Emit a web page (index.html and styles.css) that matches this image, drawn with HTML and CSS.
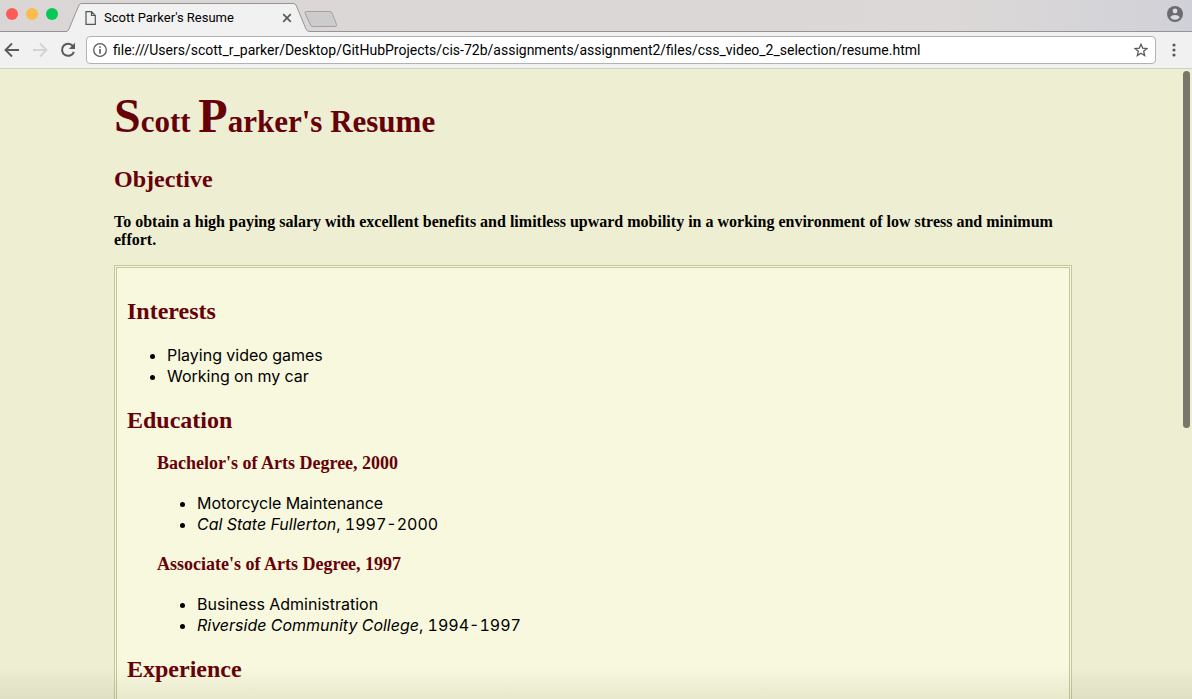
FILE: index.html
```html
<!DOCTYPE html>
<html lang="en">
<head>
<meta charset="utf-8">
<title>Scott Parker's Resume</title>
<link rel="stylesheet" href="styles.css">
</head>
<body>
<header class="browser">
  <div class="tab-strip">
    <div class="lights">
      <button class="light light-close" aria-label="Close window"></button>
      <button class="light light-min" aria-label="Minimize window"></button>
      <button class="light light-max" aria-label="Zoom window"></button>
    </div>
    <div class="tab">
      <svg class="tab-shape" width="244" height="32" viewBox="0 0 244 32" aria-hidden="true"><path d="M0 32L2 30.500Q3 29 13 4.500Q14 3.500 16 3.500H227Q229 3.500 230 5L240 29Q241 31.500 244 31.500V32Z" fill="#f1f1f1"/><path d="M0 31.500Q2 31.500 3 29L13 5Q14 3.500 16 3.500H227Q229 3.500 230 5L240 29Q241 31.500 244 31.500" fill="none" stroke="#969393"/></svg>
      <svg class="tab-page" width="12" height="14" viewBox="0 0 12 14" aria-hidden="true"><path d="M1 .700H6.500L10.300 4.500V13.300H1ZM6.500 .700V4.500H10.300" fill="none" stroke="#555" stroke-width="1.200"/></svg>
      <span class="tab-title">Scott Parker's Resume</span>
      <button class="tab-close" aria-label="Close tab"><svg width="10" height="10" viewBox="0 0 10 10"><path d="M1.200 1.200L8.800 8.800M8.800 1.200L1.200 8.800" stroke="#5a5a5a" stroke-width="1.700"/></svg></button>
    </div>
    <button class="new-tab" aria-label="New tab"><svg width="34" height="17" viewBox="0 0 34 17"><path d="M2.500 .500H26Q27.500 .500 28 2L32.500 13.500Q33 15.500 31 15.500H8.500Q7 15.500 6.500 14L1 2Q.500 .500 2.500 .500Z" fill="#cdcccc" stroke="#a19f9f"/></svg></button>
    <button class="profile" aria-label="Profile"><svg width="16" height="16" viewBox="0 0 16 16"><circle cx="8" cy="8" r="8" fill="#6c6c70"/><circle cx="8" cy="5" r="2.400" fill="#dcdade"/><path d="M3.200 11.200Q4.500 8.900 8 8.900T12.800 11.200Q11.200 13.700 8 13.700T3.200 11.200Z" fill="#dcdade"/></svg></button>
  </div>
  <div class="toolbar">
    <button aria-label="Back"><svg width="16" height="16" viewBox="0 0 16 16"><path d="M15 8H2M8 1.500L1.500 8L8 14.500" fill="none" stroke="#5a5a5a" stroke-width="1.900"/></svg></button>
    <button aria-label="Forward"><svg width="16" height="16" viewBox="0 0 16 16"><path d="M1 8H14M8 1.500L14.500 8L8 14.500" fill="none" stroke="#d3d3d3" stroke-width="1.900"/></svg></button>
    <button aria-label="Reload"><svg width="16" height="16" viewBox="0 0 16 16"><path d="M13.200 4.300A6.100 6.100 0 1 0 13.900 9.800" fill="none" stroke="#5a5a5a" stroke-width="2"/><path d="M15 .800V7H8.800Z" fill="#5a5a5a"/></svg></button>
    <div class="address">
      <svg width="14" height="14" viewBox="0 0 14 14" aria-hidden="true"><circle cx="7" cy="7" r="6.300" fill="none" stroke="#5a5a5a" stroke-width="1.300"/><path d="M7 3.200V4.800M7 6V10.800" stroke="#5a5a5a" stroke-width="1.600"/></svg>
      <input class="url" type="text" aria-label="Address" value="file:///Users/scott_r_parker/Desktop/GitHubProjects/cis-72b/assignments/assignment2/files/css_video_2_selection/resume.html">
      <button aria-label="Bookmark"><svg width="14" height="14" viewBox="0 0 14 14"><path d="M7 1.200L8.700 5.200L13 5.500L9.700 8.300L10.700 12.600L7 10.300L3.300 12.600L4.300 8.300L1 5.500L5.300 5.200Z" fill="none" stroke="#5a5a5a" stroke-width="1.300"/></svg></button>
    </div>
    <button aria-label="Menu"><svg width="16" height="16" viewBox="0 0 16 16"><g fill="#5a5a5a"><circle cx="8" cy="3" r="1.600"/><circle cx="8" cy="8" r="1.600"/><circle cx="8" cy="13" r="1.600"/></g></svg></button>
  </div>
</header>
<main class="page">
  <h1><span class="initial">S</span>cott <span class="initial">P</span>arker's Resume</h1>
  <h2>Objective</h2>
  <p class="objective">To obtain a high paying salary with excellent benefits and limitless upward mobility in a working environment of low stress and minimum effort.</p>
  <div class="details">
    <h2>Interests</h2>
    <ul>
      <li>Playing video games</li>
      <li>Working on my car</li>
    </ul>
    <h2>Education</h2>
    <div class="entry">
      <h3>Bachelor's of Arts Degree, 2000</h3>
      <ul>
        <li>Motorcycle Maintenance</li>
        <li><em>Cal State Fullerton</em>, 1997-2000</li>
      </ul>
      <h3>Associate's of Arts Degree, 1997</h3>
      <ul>
        <li>Business Administration</li>
        <li><em>Riverside Community College</em>, 1994-1997</li>
      </ul>
    </div>
    <h2>Experience</h2>
  </div>
  <div class="scroll-thumb"></div>
  <div class="edge-shade"></div>
</main>
</body>
</html>
```
FILE: styles.css
```css
* { box-sizing: border-box; }
body {
  margin: 0;
  height: 100vh;
  display: flex;
  flex-direction: column;
  overflow: hidden;
  background: #eeeed3;
  color: #000;
}
button {
  display: flex;
  flex: none;
  padding: 0;
  border: 0;
  background: none;
}
.browser { flex: none; font-family: Roboto, sans-serif; }
.tab-strip {
  display: flex;
  height: 32px;
  background: linear-gradient(90deg, #dad6d5, #dcd8d7 80%, #d0d1d8);
  box-shadow: inset 0 -1px #969393;
}
.lights { display: flex; gap: 8px; padding: 8px 0 0 6px; width: 66px; }
.light { width: 12px; height: 12px; border-radius: 50%; }
.light-close { background: #fc5b57; }
.light-min { background: #fdbc4b; }
.light-max { background: #05c855; }
.tab {
  position: relative;
  display: flex;
  align-items: center;
  width: 244px;
  padding: 4px 18px 0 19px;
}
.tab-shape { position: absolute; inset: 0; }
.tab-page, .tab-title, .tab-close { position: relative; }
.tab-title { flex: 1; margin-left: 7px; font-size: 13px; line-height: 16px; white-space: nowrap; }
.new-tab { align-self: flex-start; margin: 11px 0 0 -6px; position: relative; }
.profile { margin: 6px 9px 0 auto; align-self: flex-start; }
.toolbar {
  display: flex;
  align-items: center;
  gap: 12px;
  height: 37px;
  padding: 0 10px 0 4px;
  background: #f1f1f1;
  border-bottom: 1px solid #cfcfca;
}
.address {
  flex: 1;
  display: flex;
  align-items: center;
  height: 28px;
  margin: 0 -2px 0 -2px;
  padding: 0 7px 0 6px;
  background: #fff;
  border: 1px solid #b2b2b2;
  border-radius: 4px;
}
.url {
  flex: 1;
  min-width: 0;
  margin: 0 6px;
  padding: 0;
  border: 0;
  outline: 0;
  background: none;
  font: 14px/20px Roboto, sans-serif;
  color: #000;
}
.page {
  position: relative;
  flex: 1;
  min-height: 0;
  overflow: hidden;
  padding: 22px 120px 0 114px;
}
h1, h2, h3 { color: #660009; font-family: "Liberation Serif", serif; font-weight: bold; }
h1 { margin: 0; font-size: 31px; line-height: 49px; }
.initial { font-size: 48px; }
h2 { margin: 19px 0; font-size: 24px; line-height: 28px; }
h3 { margin: 0; font-size: 18px; line-height: 20px; }
.objective {
  margin: 20px 0 16px;
  font: bold 16px/18px "Liberation Serif", serif;
}
.details {
  padding: 10px;
  border: 3px double #c5c69b;
  background: #f8f8de;
  font: 16px/21px Inter, sans-serif;
  font-variant-numeric: tabular-nums;
}
ul { margin: 20px 0 19px; padding-left: 40px; }
.entry { padding-left: 30px; }
.scroll-thumb {
  position: absolute;
  top: 2px;
  right: 2px;
  width: 7px;
  height: 357px;
  border-radius: 4px;
  background: #77776a;
}
.edge-shade {
  position: absolute;
  inset: auto 0 0 0;
  height: 32px;
  background: linear-gradient(transparent, rgba(90, 90, 60, .1));
}
```
